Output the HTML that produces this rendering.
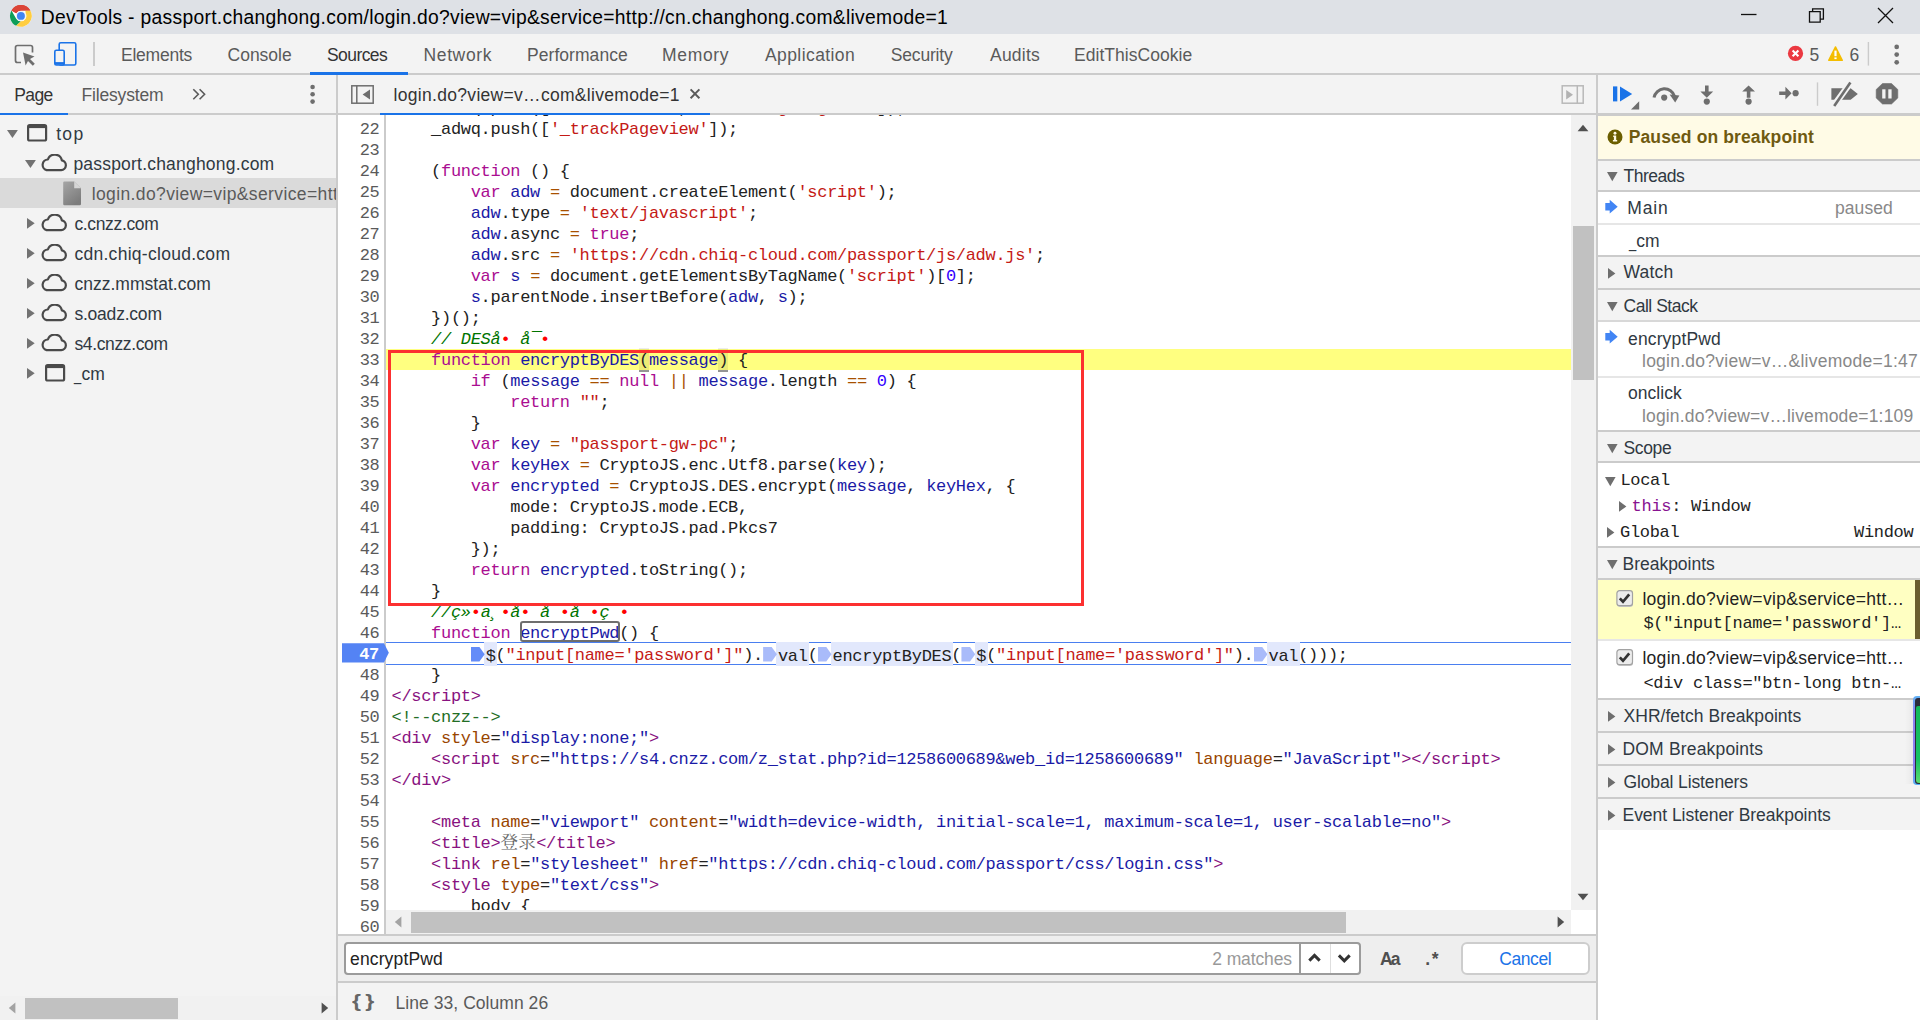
<!DOCTYPE html><html lang="en"><head><meta charset="utf-8"><title>DevTools</title><style>
*{box-sizing:border-box;margin:0;padding:0}
html,body{width:1920px;height:1020px;overflow:hidden;background:#fff}
body{font-family:"Liberation Sans","Noto Sans CJK SC",sans-serif;font-size:17.5px;color:#303942;position:relative}
.abs{position:absolute}
.tx{position:absolute;white-space:pre;line-height:24px;height:24px}
.mono{font-family:"Liberation Mono","Noto Sans CJK SC",monospace;font-size:17px;letter-spacing:-0.3017px}
#title{left:0;top:0;width:1920px;height:34px;background:#dee1e6}
#tabs{left:0;top:34px;width:1920px;height:41px;background:#f3f3f3;border-bottom:2px solid #cbcbcb}
.tab{color:#5a5a5a}
.sel{color:#333}
#sub{left:0;top:75px;width:1920px;height:40px;background:#f3f3f3;border-bottom:2px solid #cbcbcb}
#left{left:0;top:115px;width:336px;height:905px;background:#f3f3f3;overflow:hidden}
#vsep1{left:336px;top:75px;width:2px;height:945px;background:#cbcbcb}
#vsep2{left:1596px;top:75px;width:2px;height:945px;background:#cbcbcb}
#editor{left:338px;top:115px;width:1233px;height:795px;background:#fff;overflow:hidden}
#gutter{left:338px;top:115px;width:46px;height:819px;background:#fff;overflow:hidden}
#gutb{left:384px;top:115px;width:2px;height:819px;background:#cbcbcb}
.gn{position:absolute;right:4.5px;height:21px;line-height:21px;color:#5a5a5a;font-family:"Liberation Mono",monospace;font-size:17px;letter-spacing:-0.3017px;text-align:right;white-space:pre}
.cl{position:absolute;left:53.5px;height:21px;line-height:21px;white-space:pre;color:#222;font-family:"Liberation Mono","Noto Sans CJK SC",monospace;font-size:17px;letter-spacing:-0.3017px}
.k{color:#aa0d91}.s{color:#c41a16}.n{color:#3200ff}.v{color:#1a1aa6}.o{color:#a85000}
.c{color:#007400;font-style:italic}.rd{color:#f00;font-style:normal}
.t{color:#881280}.a{color:#994500}.av{color:#1a1aa6}.hc{color:#236e25}
.cj{color:#666;font-family:"Noto Serif CJK SC","Noto Sans CJK SC",serif;font-size:17.6px;letter-spacing:0.25px;line-height:0}
.mb{background:rgba(0,0,0,0.075);border-bottom:2px solid #949494;padding:2.6px 0 0.4px;color:#222}
.sm{outline:1.5px solid #777;outline-offset:-1px;border-radius:2px}
.bm{display:inline-block;width:15px;height:0;vertical-align:baseline;position:relative}
.bm:before{content:"";position:absolute;left:0.2px;top:-12.9px;width:13.8px;height:14.4px;background:#648cf8;clip-path:polygon(0 0,62% 0,100% 50%,62% 100%,0 100%)}
.bm.lt:before{background:#a9bbfa}
.bl{background:#e2e8fc;padding:4.5px 1.5px 0.5px;margin:0 -1.5px}
</style></head><body>
<div id="title" class="abs">
<svg class="abs" style="left:9.1px;top:4.3px" width="23.8" height="23.8" viewBox="0 0 48 48">
<circle cx="24" cy="24" r="22" fill="#fff"/>
<path d="M24 2A22 22 0 0 1 43.05 13H24A11 11 0 0 0 14.47 18.5L4.95 13A22 22 0 0 1 24 2Z" fill="#db4437"/>
<path d="M4.95 13L14.47 29.5A11 11 0 0 0 24 35L14.5 43.9A22 22 0 0 1 4.95 13Z" fill="#0f9d58"/>
<path d="M43.05 13A22 22 0 0 1 14.5 43.9L24 35A11 11 0 0 0 33.53 29.5A11 11 0 0 0 33.53 18.5L33 13Z" fill="#ffcd40"/>
<path d="M4.95 13A22 22 0 0 1 43.05 13H24A11 11 0 0 0 14.47 18.5Z" fill="#db4437"/>
<circle cx="24" cy="24" r="10" fill="#f1f1f1"/><circle cx="24" cy="24" r="8" fill="#4285f4"/></svg>
<span id="f1" class="tx " style="left:40.80px;top:6.3px;letter-spacing:0.296px;color:#000;font-size:19.3px;">DevTools - passport.changhong.com/login.do?view=vip&amp;service=http://cn.changhong.com&amp;livemode=1</span>
<svg class="abs" style="left:1730px;top:0" width="190" height="34" viewBox="0 0 190 34" fill="none" stroke="#111" stroke-width="1.3">
<path d="M11 14.5H26.5"/>
<path d="M79.5 11.6H90.2V22.2H79.5Z M82.6 11.6V8.8H93.4V19.1H90.2"/>
<path d="M148 8L163 23M163 8L148 23"/></svg>
</div>
<div id="tabs" class="abs"></div>
<svg class="abs" style="left:10px;top:38px" width="90" height="32" viewBox="0 0 90 32" fill="none">
<path d="M22.5 14.5V9.5a2 2 0 0 0-2-2H7.5a2 2 0 0 0-2 2v13a2 2 0 0 0 2 2H11" stroke="#6e6e6e" stroke-width="1.7"/>
<path d="M13 14.5L24.5 18.6L20 21L24.8 25.8L22.8 27.8L18 23L15.6 27.5Z" fill="#6e6e6e"/>
<rect x="49.2" y="4.7" width="16.6" height="22.3" rx="1.5" stroke="#1a73e8" stroke-width="1.6"/>
<rect x="44.8" y="12.2" width="9.4" height="14.8" rx="1.5" fill="#f3f3f3" stroke="#1a73e8" stroke-width="1.6"/>
<path d="M44.8 25.4H54.2" stroke="#1a73e8" stroke-width="2.6"/>
<path d="M84 4V28" stroke="#cbcbcb" stroke-width="2"/>
</svg>
<span id="f2" class="tx tab" style="left:121.00px;top:42.5px;letter-spacing:-0.243px;">Elements</span>
<span id="f3" class="tx tab" style="left:227.50px;top:42.5px;letter-spacing:0.004px;">Console</span>
<span id="f4" class="tx tab sel" style="left:327.00px;top:42.5px;letter-spacing:-0.575px;">Sources</span>
<span id="f5" class="tx tab" style="left:423.50px;top:42.5px;letter-spacing:0.628px;">Network</span>
<span id="f6" class="tx tab" style="left:527.00px;top:42.5px;letter-spacing:0.055px;">Performance</span>
<span id="f7" class="tx tab" style="left:662.00px;top:42.5px;letter-spacing:0.670px;">Memory</span>
<span id="f8" class="tx tab" style="left:765.00px;top:42.5px;letter-spacing:0.412px;">Application</span>
<span id="f9" class="tx tab" style="left:890.80px;top:42.5px;letter-spacing:-0.181px;">Security</span>
<span id="f10" class="tx tab" style="left:990.00px;top:42.5px;letter-spacing:0.222px;">Audits</span>
<span id="f11" class="tx tab" style="left:1074.00px;top:42.5px;letter-spacing:0.042px;">EditThisCookie</span>
<div class="abs" style="left:309.5px;top:72px;width:98px;height:3px;background:#1a73e8"></div>
<svg class="abs" style="left:1780px;top:38px" width="140" height="34" viewBox="0 0 140 34">
<circle cx="15.5" cy="15.4" r="7.6" fill="#eb3941"/>
<path d="M12.6 12.5L18.4 18.3M18.4 12.5L12.6 18.3" stroke="#fff" stroke-width="2.1"/>
<path d="M55.5 8.9L62.3 22.3H48.7Z" fill="#f4bd00" stroke="#f4bd00" stroke-width="1.4" stroke-linejoin="round"/>
<path d="M55.5 12.6V18.2" stroke="#fff" stroke-width="2.2"/><rect x="54.4" y="19.4" width="2.2" height="1.7" fill="#fff"/>
<path d="M88.4 4V27.6" stroke="#cbcbcb" stroke-width="1.4"/>
<circle cx="116.7" cy="8.9" r="2.35" fill="#6e6e6e"/><circle cx="116.7" cy="16.6" r="2.35" fill="#6e6e6e"/><circle cx="116.7" cy="24.3" r="2.35" fill="#6e6e6e"/>
</svg>
<span id="f12" class="tx tab" style="left:1809.50px;top:42.5px;">5</span>
<span id="f13" class="tx tab" style="left:1849.50px;top:42.5px;">6</span>
<div id="sub" class="abs"></div>
<span id="f14" class="tx sel" style="left:14.30px;top:82.5px;letter-spacing:-0.613px;">Page</span>
<span id="f15" class="tx tab" style="left:81.50px;top:82.5px;letter-spacing:-0.171px;">Filesystem</span>
<div class="abs" style="left:0;top:112.6px;width:68px;height:2.4px;background:#1a73e8"></div>
<svg class="abs" style="left:185px;top:80px" width="200" height="30" viewBox="0 0 200 30" fill="none">
<path d="M8.3 9.2L13.3 14.2L8.3 19.2M14.6 9.2L19.6 14.2L14.6 19.2" stroke="#5a5a5a" stroke-width="1.6"/>
<circle cx="127.6" cy="7" r="2.3" fill="#6e6e6e"/><circle cx="127.6" cy="14.2" r="2.3" fill="#6e6e6e"/><circle cx="127.6" cy="21.6" r="2.3" fill="#6e6e6e"/>
<rect x="166.8" y="5.8" width="21.4" height="17.4" stroke="#6e6e6e" stroke-width="1.5"/>
<path d="M171.8 5.8V23.2" stroke="#6e6e6e" stroke-width="1.5"/>
<path d="M185 9.5V19.5L177.6 14.5Z" fill="#6e6e6e"/>
</svg>
<span id="f16" class="tx sel" style="left:393.60px;top:82.5px;letter-spacing:0.300px;">login.do?view=v…com&amp;livemode=1</span>
<svg class="abs" style="left:688px;top:87px" width="14" height="14" viewBox="0 0 14 14"><path d="M2.6 2.4L11.4 11.2M11.4 2.4L2.6 11.2" stroke="#5a5a5a" stroke-width="2"/></svg>
<div class="abs" style="left:380px;top:112.6px;width:329.5px;height:2.4px;background:#1a73e8"></div>
<svg class="abs" style="left:1555px;top:82px" width="34" height="26" viewBox="0 0 34 26" fill="none">
<rect x="7.2" y="3.8" width="21" height="17.4" stroke="#b8b8b8" stroke-width="1.5"/>
<path d="M22.3 3.8V21.2" stroke="#b8b8b8" stroke-width="1.5"/>
<path d="M11.2 8V17.4L18 12.7Z" fill="#b2b2b2"/></svg>
<div id="left" class="abs">
</div>
<div class="abs" style="left:0;top:178px;width:336px;height:30px;background:#dadada"></div>
<svg class="abs" style="left:7.3px;top:130.1px" width="12" height="10" viewBox="0 0 12 10"><path d="M0 0H10.9L5.45 8.1Z" fill="#727272"/></svg>
<svg class="abs" style="left:26.8px;top:124.0px" width="22" height="19" viewBox="0 0 22 19" fill="none"><rect x="1.1" y="1.1" width="18" height="15.4" rx="1.6" stroke="#4a4a4a" stroke-width="2.2"/><path d="M1.1 2.6H19.1" stroke="#4a4a4a" stroke-width="3"/></svg>
<span id="f17" class="tx " style="left:56.20px;top:121.5px;letter-spacing:1.303px;">top</span>
<svg class="abs" style="left:25.0px;top:159.8px" width="12" height="10" viewBox="0 0 12 10"><path d="M0 0H10.9L5.45 8.1Z" fill="#727272"/></svg>
<svg class="abs" style="left:40.4px;top:154.2px" width="29" height="19" viewBox="0 0 29 19" fill="none"><path d="M6.6 16.1H21.2A4.9 4.9 0 0 0 21.9 6.4A7.3 7.3 0 0 0 7.9 5.5A5.4 5.4 0 0 0 6.6 16.1Z" stroke="#4a4a4a" stroke-width="2.2" stroke-linejoin="round"/></svg>
<span id="f18" class="tx " style="left:73.40px;top:151.5px;letter-spacing:0.203px;">passport.changhong.com</span>
<svg class="abs" style="left:63px;top:180.6px" width="20" height="25" viewBox="0 0 20 25"><defs><linearGradient id="fg" x1="0" y1="0" x2="0.6" y2="1"><stop offset="0" stop-color="#a6a6a6"/><stop offset="1" stop-color="#7c7c7c"/></linearGradient></defs><path d="M1.4 0.4H11.2L18 7.2V23A1.2 1.2 0 0 1 16.8 24.2H1.4A1.2 1.2 0 0 1 0.2 23V1.6A1.2 1.2 0 0 1 1.4 0.4Z" fill="url(#fg)"/><path d="M11.2 0.4V7.2H18Z" fill="#d6d6d6"/></svg>
<div class="abs" style="left:0;top:178px;width:336px;height:30px;overflow:hidden"><span id="f19" class="tx " style="left:91.70px;top:3.5px;letter-spacing:0.381px;color:#5a5a5a">login.do?view=vip&amp;service=http://cn.changhong.com&amp;livemode=1</span></div>
<svg class="abs" style="left:27.0px;top:217.8px" width="10" height="12" viewBox="0 0 10 12"><path d="M0 0V10.7L7.7 5.35Z" fill="#727272"/></svg>
<svg class="abs" style="left:40.4px;top:214.0px" width="29" height="19" viewBox="0 0 29 19" fill="none"><path d="M6.6 16.1H21.2A4.9 4.9 0 0 0 21.9 6.4A7.3 7.3 0 0 0 7.9 5.5A5.4 5.4 0 0 0 6.6 16.1Z" stroke="#4a4a4a" stroke-width="2.2" stroke-linejoin="round"/></svg>
<span id="f20" class="tx " style="left:74.40px;top:211.5px;letter-spacing:-0.349px;">c.cnzz.com</span>
<svg class="abs" style="left:27.0px;top:247.8px" width="10" height="12" viewBox="0 0 10 12"><path d="M0 0V10.7L7.7 5.35Z" fill="#727272"/></svg>
<svg class="abs" style="left:40.4px;top:244.0px" width="29" height="19" viewBox="0 0 29 19" fill="none"><path d="M6.6 16.1H21.2A4.9 4.9 0 0 0 21.9 6.4A7.3 7.3 0 0 0 7.9 5.5A5.4 5.4 0 0 0 6.6 16.1Z" stroke="#4a4a4a" stroke-width="2.2" stroke-linejoin="round"/></svg>
<span id="f21" class="tx " style="left:74.40px;top:241.5px;letter-spacing:0.283px;">cdn.chiq-cloud.com</span>
<svg class="abs" style="left:27.0px;top:277.8px" width="10" height="12" viewBox="0 0 10 12"><path d="M0 0V10.7L7.7 5.35Z" fill="#727272"/></svg>
<svg class="abs" style="left:40.4px;top:274.0px" width="29" height="19" viewBox="0 0 29 19" fill="none"><path d="M6.6 16.1H21.2A4.9 4.9 0 0 0 21.9 6.4A7.3 7.3 0 0 0 7.9 5.5A5.4 5.4 0 0 0 6.6 16.1Z" stroke="#4a4a4a" stroke-width="2.2" stroke-linejoin="round"/></svg>
<span id="f22" class="tx " style="left:74.40px;top:271.5px;letter-spacing:0.018px;">cnzz.mmstat.com</span>
<svg class="abs" style="left:27.0px;top:307.8px" width="10" height="12" viewBox="0 0 10 12"><path d="M0 0V10.7L7.7 5.35Z" fill="#727272"/></svg>
<svg class="abs" style="left:40.4px;top:304.0px" width="29" height="19" viewBox="0 0 29 19" fill="none"><path d="M6.6 16.1H21.2A4.9 4.9 0 0 0 21.9 6.4A7.3 7.3 0 0 0 7.9 5.5A5.4 5.4 0 0 0 6.6 16.1Z" stroke="#4a4a4a" stroke-width="2.2" stroke-linejoin="round"/></svg>
<span id="f23" class="tx " style="left:74.40px;top:301.5px;letter-spacing:-0.212px;">s.oadz.com</span>
<svg class="abs" style="left:27.0px;top:337.8px" width="10" height="12" viewBox="0 0 10 12"><path d="M0 0V10.7L7.7 5.35Z" fill="#727272"/></svg>
<svg class="abs" style="left:40.4px;top:334.0px" width="29" height="19" viewBox="0 0 29 19" fill="none"><path d="M6.6 16.1H21.2A4.9 4.9 0 0 0 21.9 6.4A7.3 7.3 0 0 0 7.9 5.5A5.4 5.4 0 0 0 6.6 16.1Z" stroke="#4a4a4a" stroke-width="2.2" stroke-linejoin="round"/></svg>
<span id="f24" class="tx " style="left:74.40px;top:331.5px;letter-spacing:-0.367px;">s4.cnzz.com</span>
<svg class="abs" style="left:27.0px;top:367.8px" width="10" height="12" viewBox="0 0 10 12"><path d="M0 0V10.7L7.7 5.35Z" fill="#727272"/></svg>
<svg class="abs" style="left:44.8px;top:364.2px" width="22" height="19" viewBox="0 0 22 19" fill="none"><rect x="1.1" y="1.1" width="18" height="15.4" rx="1.6" stroke="#4a4a4a" stroke-width="2.2"/><path d="M1.1 2.6H19.1" stroke="#4a4a4a" stroke-width="3"/></svg>
<span id="f25" class="tx " style="left:74.30px;top:361.5px;"><span style="display:inline-block;transform:scaleX(.74);transform-origin:left bottom;margin-right:-2.6px">_</span>cm</span>
<div class="abs" style="left:0;top:995.5px;width:336px;height:24.5px;background:#f1f1f1"></div>
<div class="abs" style="left:25px;top:998px;width:153px;height:21px;background:#c1c1c1"></div>
<svg class="abs" style="left:8px;top:1002px" width="8" height="12" viewBox="0 0 8 12"><path d="M7.4 0.6V11.4L0.8 6Z" fill="#a3a3a3"/></svg>
<svg class="abs" style="left:320.5px;top:1002px" width="8" height="12" viewBox="0 0 8 12"><path d="M0.6 0.6V11.4L7.2 6Z" fill="#505050"/></svg>
<div id="vsep1" class="abs"></div>
<div id="editor" class="abs">
<div class="abs" style="left:48px;top:234px;width:1185px;height:21px;background:#ffff80"></div>
<div class="abs" style="left:48px;top:527px;width:1185px;height:23px;border-top:1.3px solid #4a7ff0;border-bottom:1.3px solid #4a7ff0"></div>
<div class="abs" style="left:0;top:-115px;width:1233px;height:910px">
<div class="cl l21" style="top:98.0px">    _adwq.push([<span class="s">&#x27;_setAccount&#x27;</span>, <span class="s">&#x27;web-cn-g001g-001&#x27;</span>]);</div>
<div class="cl l22" style="top:119.0px">    _adwq.push([<span class="s">&#x27;_trackPageview&#x27;</span>]);</div>
<div class="cl l23" style="top:140.0px"></div>
<div class="cl l24" style="top:161.0px">    (<span class="k">function</span> () {</div>
<div class="cl l25" style="top:182.0px">        <span class="k">var</span> <span class="v">adw</span> <span class="o">=</span> document.createElement(<span class="s">&#x27;script&#x27;</span>);</div>
<div class="cl l26" style="top:203.0px">        <span class="v">adw</span>.type <span class="o">=</span> <span class="s">&#x27;text/javascript&#x27;</span>;</div>
<div class="cl l27" style="top:224.0px">        <span class="v">adw</span>.async <span class="o">=</span> <span class="k">true</span>;</div>
<div class="cl l28" style="top:245.0px">        <span class="v">adw</span>.src <span class="o">=</span> <span class="s">&#x27;https://cdn.chiq-cloud.com/passport/js/adw.js&#x27;</span>;</div>
<div class="cl l29" style="top:266.0px">        <span class="k">var</span> <span class="v">s</span> <span class="o">=</span> document.getElementsByTagName(<span class="s">&#x27;script&#x27;</span>)[<span class="n">0</span>];</div>
<div class="cl l30" style="top:287.0px">        <span class="v">s</span>.parentNode.insertBefore(<span class="v">adw</span>, <span class="v">s</span>);</div>
<div class="cl l31" style="top:308.0px">    })();</div>
<div class="cl l32" style="top:329.0px">    <span class="c">// DESå<span class="rd">•</span> å¯<span class="rd">•</span></span></div>
<div class="cl l33" style="top:350.0px">    <span class="k">function</span> <span class="v">encryptByDES</span><span class="mb">(</span><span class="v">message</span><span class="mb">)</span> {</div>
<div class="cl l34" style="top:371.0px">        <span class="k">if</span> (<span class="v">message</span> <span class="o">==</span> <span class="k">null</span> <span class="o">||</span> <span class="v">message</span>.length <span class="o">==</span> <span class="n">0</span>) {</div>
<div class="cl l35" style="top:392.0px">            <span class="k">return</span> <span class="s">&quot;&quot;</span>;</div>
<div class="cl l36" style="top:413.0px">        }</div>
<div class="cl l37" style="top:434.0px">        <span class="k">var</span> <span class="v">key</span> <span class="o">=</span> <span class="s">&quot;passport-gw-pc&quot;</span>;</div>
<div class="cl l38" style="top:455.0px">        <span class="k">var</span> <span class="v">keyHex</span> <span class="o">=</span> CryptoJS.enc.Utf8.parse(<span class="v">key</span>);</div>
<div class="cl l39" style="top:476.0px">        <span class="k">var</span> <span class="v">encrypted</span> <span class="o">=</span> CryptoJS.DES.encrypt(<span class="v">message</span>, <span class="v">keyHex</span>, {</div>
<div class="cl l40" style="top:497.0px">            mode: CryptoJS.mode.ECB,</div>
<div class="cl l41" style="top:518.0px">            padding: CryptoJS.pad.Pkcs7</div>
<div class="cl l42" style="top:539.0px">        });</div>
<div class="cl l43" style="top:560.0px">        <span class="k">return</span> <span class="v">encrypted</span>.toString();</div>
<div class="cl l44" style="top:581.0px">    }</div>
<div class="cl l45" style="top:602.0px">    <span class="c">//ç»<span class="rd">•</span>a¸<span class="rd">•</span>å<span class="rd">•</span> å <span class="rd">•</span>å <span class="rd">•</span>ç <span class="rd">•</span></span></div>
<div class="cl l46" style="top:623.0px">    <span class="k">function</span> <span class="v">encryptPwd</span>() {</div>
<div class="cl l47" style="top:645.0px">        <span class="bm"></span><span class="bl">$</span>(<span class="s">"input[name='password']"</span>).<span class="bm lt"></span><span class="bl">val</span>(<span class="bm lt"></span><span class="bl">encryptByDES</span>(<span class="bm lt"></span><span class="bl">$</span>(<span class="s">"input[name='password']"</span>).<span class="bm lt"></span><span class="bl">val</span>()));</div>
<div class="cl l48" style="top:665.0px">    }</div>
<div class="cl l49" style="top:686.0px"><span class="t">&lt;/script&gt;</span></div>
<div class="cl l50" style="top:707.0px"><span class="hc">&lt;!--cnzz--&gt;</span></div>
<div class="cl l51" style="top:728.0px"><span class="t">&lt;div </span><span class="a">style</span>=<span class="av">&quot;display:none;&quot;</span><span class="t">&gt;</span></div>
<div class="cl l52" style="top:749.0px">    <span class="t">&lt;script </span><span class="a">src</span>=<span class="av">&quot;https://s4.cnzz.com/z_stat.php?id=1258600689&amp;web_id=1258600689&quot;</span> <span class="a">language</span>=<span class="av">&quot;JavaScript&quot;</span><span class="t">&gt;&lt;/script&gt;</span></div>
<div class="cl l53" style="top:770.0px"><span class="t">&lt;/div&gt;</span></div>
<div class="cl l54" style="top:791.0px"></div>
<div class="cl l55" style="top:812.0px">    <span class="t">&lt;meta </span><span class="a">name</span>=<span class="av">&quot;viewport&quot;</span> <span class="a">content</span>=<span class="av">&quot;width=device-width, initial-scale=1, maximum-scale=1, user-scalable=no&quot;</span><span class="t">&gt;</span></div>
<div class="cl l56" style="top:833.0px">    <span class="t">&lt;title&gt;</span><span class="cj">登录</span><span class="t">&lt;/title&gt;</span></div>
<div class="cl l57" style="top:854.0px">    <span class="t">&lt;link </span><span class="a">rel</span>=<span class="av">&quot;stylesheet&quot;</span> <span class="a">href</span>=<span class="av">&quot;https://cdn.chiq-cloud.com/passport/css/login.css&quot;</span><span class="t">&gt;</span></div>
<div class="cl l58" style="top:875.0px">    <span class="t">&lt;style </span><span class="a">type</span>=<span class="av">&quot;text/css&quot;</span><span class="t">&gt;</span></div>
<div class="cl l59" style="top:896.0px">        body {</div>
<div class="cl l60" style="top:917.0px"></div>
</div>
<div class="abs" style="left:50px;top:235px;width:696px;height:256px;border:3px solid #fc3030"></div>
<div class="abs" style="left:182.2px;top:505.5px;width:100px;height:21px;border:2px solid #6e6e6e;border-radius:3px"></div>
</div>
<div id="gutter" class="abs"><div class="abs" style="left:0;top:-115px;width:46px;height:1000px">
<div class="gn" style="top:119px">22</div>
<div class="gn" style="top:140px">23</div>
<div class="gn" style="top:161px">24</div>
<div class="gn" style="top:182px">25</div>
<div class="gn" style="top:203px">26</div>
<div class="gn" style="top:224px">27</div>
<div class="gn" style="top:245px">28</div>
<div class="gn" style="top:266px">29</div>
<div class="gn" style="top:287px">30</div>
<div class="gn" style="top:308px">31</div>
<div class="gn" style="top:329px">32</div>
<div class="gn" style="top:350px">33</div>
<div class="gn" style="top:371px">34</div>
<div class="gn" style="top:392px">35</div>
<div class="gn" style="top:413px">36</div>
<div class="gn" style="top:434px">37</div>
<div class="gn" style="top:455px">38</div>
<div class="gn" style="top:476px">39</div>
<div class="gn" style="top:497px">40</div>
<div class="gn" style="top:518px">41</div>
<div class="gn" style="top:539px">42</div>
<div class="gn" style="top:560px">43</div>
<div class="gn" style="top:581px">44</div>
<div class="gn" style="top:602px">45</div>
<div class="gn" style="top:623px">46</div>
<div class="gn bp" style="top:644px"> </div>
<div class="gn" style="top:665px">48</div>
<div class="gn" style="top:686px">49</div>
<div class="gn" style="top:707px">50</div>
<div class="gn" style="top:728px">51</div>
<div class="gn" style="top:749px">52</div>
<div class="gn" style="top:770px">53</div>
<div class="gn" style="top:791px">54</div>
<div class="gn" style="top:812px">55</div>
<div class="gn" style="top:833px">56</div>
<div class="gn" style="top:854px">57</div>
<div class="gn" style="top:875px">58</div>
<div class="gn" style="top:896px">59</div>
<div class="gn" style="top:917px">60</div>
</div></div>
<div id="gutb" class="abs"></div>
<svg class="abs" style="left:342px;top:643px" width="50" height="21" viewBox="0 0 50 21"><path d="M0 0.3H42L46.8 9.8L42 19.4H0Z" fill="#5483f4"/></svg>
<div class="gn abs" style="left:341px;top:643.6px;width:38px;color:#fff;text-align:right;font-weight:bold">47</div>
<div class="abs" style="left:1571px;top:115px;width:25px;height:795px;background:#f1f1f1"></div>
<div class="abs" style="left:1573px;top:226px;width:21px;height:154px;background:#c1c1c1"></div>
<svg class="abs" style="left:1577px;top:124px" width="12" height="8" viewBox="0 0 12 8"><path d="M0.6 7.2H11.4L6 0.8Z" fill="#505050"/></svg>
<svg class="abs" style="left:1577px;top:893px" width="12" height="8" viewBox="0 0 12 8"><path d="M0.6 0.8H11.4L6 7.2Z" fill="#505050"/></svg>
<div class="abs" style="left:386px;top:910px;width:1185px;height:24px;background:#f1f1f1"></div>
<div class="abs" style="left:411px;top:912px;width:935px;height:21px;background:#c1c1c1"></div>
<svg class="abs" style="left:394px;top:916px" width="8" height="12" viewBox="0 0 8 12"><path d="M7.4 0.6V11.4L0.8 6Z" fill="#a3a3a3"/></svg>
<svg class="abs" style="left:1556.5px;top:916px" width="8" height="12" viewBox="0 0 8 12"><path d="M0.6 0.6V11.4L7.2 6Z" fill="#505050"/></svg>
<div class="abs" style="left:1571px;top:910px;width:25px;height:24px;background:#fff"></div>
<div class="abs" style="left:338px;top:934px;width:1258px;height:49px;background:#eee;border-top:2px solid #cbcbcb;border-bottom:2px solid #cbcbcb"></div>
<div class="abs" style="left:344px;top:942px;width:1017px;height:33px;background:#fff;border:2px solid #9b9b9b;border-radius:4px"></div>
<div class="abs" style="left:1298.8px;top:942px;width:2px;height:33px;background:#9b9b9b"></div>
<div class="abs" style="left:1329.5px;top:944px;width:1.2px;height:29px;background:#dedede"></div>
<span id="f26" class="tx " style="left:350.00px;top:946.7px;letter-spacing:0.145px;color:#222">encryptPwd</span>
<span id="f27" class="tx " style="left:1212.30px;top:946.7px;letter-spacing:-0.123px;color:#999">2 matches</span>
<svg class="abs" style="left:1304px;top:948px" width="52" height="20" viewBox="0 0 52 20" fill="none" stroke="#333" stroke-width="3"><path d="M5.3 12.6L10.5 7.4L15.7 12.6"/><path d="M34.9 7.4L40.3 12.8L45.7 7.4"/></svg>
<span id="f28" class="tx " style="left:1380.00px;top:946.7px;letter-spacing:-1.838px;color:#4f4f4f;font-weight:bold">Aa</span>
<span id="f29" class="tx " style="left:1425.30px;top:946.7px;letter-spacing:1.538px;color:#4f4f4f;font-weight:bold">.*</span>
<div class="abs" style="left:1460.5px;top:942px;width:129px;height:33px;background:#fff;border:2px solid #cdcdcd;border-radius:6px"></div>
<span id="f30" class="tx " style="left:1499.20px;top:946.7px;letter-spacing:-0.397px;color:#1a73e8">Cancel</span>
<div class="abs" style="left:338px;top:983px;width:1258px;height:37px;background:#f3f3f3"></div>
<span id="f31" class="tx " style="left:351.50px;top:988.6px;letter-spacing:3.401px;color:#666;font-weight:bold;font-size:18.5px;transform:scaleX(1.25);transform-origin:left center">{}</span>
<span id="f32" class="tx " style="left:395.60px;top:990.6px;letter-spacing:0.045px;color:#5a5a5a">Line 33, Column 26</span>
<div id="vsep2" class="abs"></div>
<div class="abs" style="left:1598px;top:115px;width:322px;height:905px;background:#fff"></div>
<svg class="abs" style="left:1600px;top:76px" width="320" height="38" viewBox="0 0 320 38">
<rect x="13" y="10.4" width="4.3" height="15" fill="#1a73e8"/><path d="M20 10.4V25.4L32.2 17.9Z" fill="#1a73e8"/>
<path d="M39.2 25.2V33.4H31Z" fill="#6e6e6e"/>
<path d="M54 21.6A10.6 10.6 0 0 1 74.6 20.4" fill="none" stroke="#6e6e6e" stroke-width="3"/>
<path d="M69.6 18.6L79.4 19.4L75.2 26.4Z" fill="#6e6e6e"/><circle cx="64.2" cy="21.6" r="3.1" fill="#6e6e6e"/>
<path d="M105 9.4H108.6V15.6H113.2L106.8 21.8L100.4 15.6H105Z" fill="#6e6e6e"/><circle cx="106.8" cy="25.6" r="3.1" fill="#6e6e6e"/>
<path d="M146.8 21.8H150.4V15.6H155L148.6 9.4L142.2 15.6H146.8Z" fill="#6e6e6e"/><circle cx="148.6" cy="25.6" r="3.1" fill="#6e6e6e"/>
<path d="M179.2 15.4H185.4V10.8L191.6 17.2L185.4 23.6V19H179.2Z" fill="#6e6e6e"/><circle cx="195.6" cy="17.2" r="3.1" fill="#6e6e6e"/>
<path d="M217.5 6.4V29.8" stroke="#cbcbcb" stroke-width="1.4"/>
<path d="M231.4 12.2H250.6L257.8 18L250.6 23.8H231.4Z" fill="#6e6e6e"/>
<path d="M251.4 5.4L233.2 30.6" stroke="#f3f3f3" stroke-width="6.4"/><path d="M250.4 6.4L234.2 30" stroke="#6e6e6e" stroke-width="2.6"/>
<path d="M282.5 7.5H291.5L297.8 13.5V22L291.5 28H282.5L276.2 22V13.5Z" fill="#6e6e6e" stroke="#6e6e6e" stroke-width="0.6" stroke-linejoin="round"/>
<rect x="282.2" y="13.3" width="3.3" height="9.2" fill="#f3f3f3"/><rect x="288.3" y="13.3" width="3.3" height="9.2" fill="#f3f3f3"/>
</svg>
<div class="abs" style="left:1598px;top:115px;width:322px;height:1px;background:#cbcbcb;z-index:3"></div>
<div class="abs" style="left:1598px;top:115px;width:322px;height:44px;background:#fffbe6"></div>
<svg class="abs" style="left:1606.5px;top:128.5px" width="16" height="16" viewBox="0 0 16 16"><circle cx="8" cy="8" r="7.5" fill="#6b5e00"/><path d="M6.2 6.6H9.2V11H10.2V12.4H5.9V11H6.9V8H6.2Z" fill="#fffbe6"/><circle cx="8" cy="4.3" r="1.45" fill="#fffbe6"/></svg>
<span id="f33" class="tx " style="left:1628.70px;top:124.6px;letter-spacing:0.122px;color:#6f5a10;font-weight:bold">Paused on breakpoint</span>
<div class="abs" style="left:1598px;top:159.0px;width:322px;height:33.0px;background:#f3f3f3"></div><div class="abs" style="left:1598px;top:159.0px;width:322px;height:2.0px;background:#cbcbcb"></div><div class="abs" style="left:1598px;top:190.0px;width:322px;height:2.0px;background:#cbcbcb"></div><svg class="abs" style="left:1606.7px;top:172.4px" width="12" height="10" viewBox="0 0 12 10"><path d="M0 0H10.6L5.3 9.2Z" fill="#6e6e6e"/></svg><span id="f34" class="tx " style="left:1623.50px;top:163.9px;letter-spacing:-0.491px;">Threads</span>
<svg class="abs" style="left:1605px;top:199.0px" width="14" height="16" viewBox="0 0 14 16"><path d="M0.3 3.9H4.7V0.8L12.7 7.7L4.7 14.6V11.4H0.3Z" fill="#4285f4"/></svg>
<span id="f35" class="tx " style="left:1627.30px;top:195.5px;letter-spacing:0.834px;">Main</span>
<span id="f36" class="tx " style="left:1835.00px;top:195.5px;letter-spacing:0.064px;color:#888">paused</span>
<div class="abs" style="left:1598px;top:223.0px;width:322px;height:2.0px;background:#e6e6e6"></div>
<span id="f37" class="tx " style="left:1629.20px;top:228.7px;"><span style="display:inline-block;transform:scaleX(.74);transform-origin:left bottom;margin-right:-2.6px">_</span>cm</span>
<div class="abs" style="left:1598px;top:255.4px;width:322px;height:34.6px;background:#f3f3f3"></div><div class="abs" style="left:1598px;top:255.4px;width:322px;height:2.0px;background:#cbcbcb"></div><div class="abs" style="left:1598px;top:288.0px;width:322px;height:2.0px;background:#cbcbcb"></div><svg class="abs" style="left:1608.0px;top:267.7px" width="9" height="12" viewBox="0 0 9 12"><path d="M0 0V10.8L7.4 5.4Z" fill="#6e6e6e"/></svg><span id="f38" class="tx " style="left:1623.50px;top:260.3px;letter-spacing:0.197px;">Watch</span>
<div class="abs" style="left:1598px;top:288.0px;width:322px;height:34.0px;background:#f3f3f3"></div><div class="abs" style="left:1598px;top:288.0px;width:322px;height:2.0px;background:#cbcbcb"></div><div class="abs" style="left:1598px;top:320.0px;width:322px;height:2.0px;background:#cbcbcb"></div><svg class="abs" style="left:1606.7px;top:302.1px" width="12" height="10" viewBox="0 0 12 10"><path d="M0 0H10.6L5.3 9.2Z" fill="#6e6e6e"/></svg><span id="f39" class="tx " style="left:1623.50px;top:293.6px;letter-spacing:-0.470px;">Call Stack</span>
<div class="abs" style="left:1598px;top:320.0px;width:322px;height:2.0px;background:#d8d8d8"></div>
<svg class="abs" style="left:1605px;top:329.4px" width="14" height="16" viewBox="0 0 14 16"><path d="M0.3 3.9H4.7V0.8L12.7 7.7L4.7 14.6V11.4H0.3Z" fill="#4285f4"/></svg>
<span id="f40" class="tx " style="left:1628.00px;top:326.9px;letter-spacing:0.145px;">encryptPwd</span>
<span id="f41" class="tx " style="left:1642.00px;top:348.7px;letter-spacing:0.249px;color:#888">login.do?view=v…&amp;livemode=1:47</span>
<div class="abs" style="left:1598px;top:376.0px;width:322px;height:2.0px;background:#e6e6e6"></div>
<span id="f42" class="tx " style="left:1628.00px;top:381.4px;letter-spacing:0.043px;">onclick</span>
<span id="f43" class="tx " style="left:1642.00px;top:403.9px;letter-spacing:0.158px;color:#888">login.do?view=v…livemode=1:109</span>
<div class="abs" style="left:1598px;top:430.0px;width:322px;height:33.0px;background:#f3f3f3"></div><div class="abs" style="left:1598px;top:430.0px;width:322px;height:2.0px;background:#cbcbcb"></div><div class="abs" style="left:1598px;top:461.0px;width:322px;height:2.0px;background:#cbcbcb"></div><svg class="abs" style="left:1606.7px;top:444.0px" width="12" height="10" viewBox="0 0 12 10"><path d="M0 0H10.6L5.3 9.2Z" fill="#6e6e6e"/></svg><span id="f44" class="tx " style="left:1623.50px;top:435.5px;letter-spacing:-0.347px;">Scope</span>
<svg class="abs" style="left:1605.3px;top:476.6px" width="12" height="10" viewBox="0 0 12 10"><path d="M0 0H10.6L5.3 9.2Z" fill="#6e6e6e"/></svg>
<span id="f45" class="tx mono" style="left:1620.40px;top:469.1px;color:#222">Local</span>
<svg class="abs" style="left:1618.8px;top:500.8px" width="9" height="12" viewBox="0 0 9 12"><path d="M0 0V10.8L7.4 5.4Z" fill="#6e6e6e"/></svg>
<span class="tx mono" style="left:1631.6px;top:495.2px;color:#222"><span style="color:#881391">this</span>: Window</span>
<svg class="abs" style="left:1606.8px;top:526.6px" width="9" height="12" viewBox="0 0 9 12"><path d="M0 0V10.8L7.4 5.4Z" fill="#6e6e6e"/></svg>
<span id="f46" class="tx mono" style="left:1620.00px;top:520.9px;color:#222">Global</span>
<span id="f47" class="tx mono" style="left:1854.00px;top:520.9px;color:#222">Window</span>
<div class="abs" style="left:1598px;top:546.0px;width:322px;height:34.0px;background:#f3f3f3"></div><div class="abs" style="left:1598px;top:546.0px;width:322px;height:2.0px;background:#cbcbcb"></div><div class="abs" style="left:1598px;top:578.0px;width:322px;height:2.0px;background:#cbcbcb"></div><svg class="abs" style="left:1606.7px;top:560.1px" width="12" height="10" viewBox="0 0 12 10"><path d="M0 0H10.6L5.3 9.2Z" fill="#6e6e6e"/></svg><span id="f48" class="tx " style="left:1622.50px;top:551.6px;letter-spacing:-0.016px;">Breakpoints</span>
<div class="abs" style="left:1598px;top:580px;width:322px;height:58.6px;background:#ffffc2"></div>
<div class="abs" style="left:1915px;top:580px;width:5px;height:58.6px;background:#6b5e2e"></div>
<svg class="abs" style="left:1615.8px;top:589.8px" width="19" height="19" viewBox="0 0 19 19"><rect x="1" y="1.6" width="16" height="15.4" rx="3" fill="#c9c9c9"/><rect x="0.9" y="0.7" width="15.6" height="15" rx="2.6" fill="#ececec" stroke="#a2a2a2" stroke-width="1.2"/><path d="M3.8 8.4L7 11.8L13.2 4.4" fill="none" stroke="#333" stroke-width="2.7"/></svg>
<span id="f49" class="tx " style="left:1642.40px;top:587.3px;letter-spacing:0.303px;color:#222">login.do?view=vip&amp;service=htt…</span>
<span id="f50" class="tx mono" style="left:1643.40px;top:612.0px;color:#222">$(&quot;input[name=&#x27;password&#x27;]…</span>
<div class="abs" style="left:1598px;top:638.6px;width:322px;height:2.0px;background:#e6e6e6"></div>
<svg class="abs" style="left:1615.8px;top:648.9px" width="19" height="19" viewBox="0 0 19 19"><rect x="1" y="1.6" width="16" height="15.4" rx="3" fill="#c9c9c9"/><rect x="0.9" y="0.7" width="15.6" height="15" rx="2.6" fill="#ececec" stroke="#a2a2a2" stroke-width="1.2"/><path d="M3.8 8.4L7 11.8L13.2 4.4" fill="none" stroke="#333" stroke-width="2.7"/></svg>
<span id="f51" class="tx " style="left:1642.40px;top:646.4px;letter-spacing:0.303px;color:#222">login.do?view=vip&amp;service=htt…</span>
<span id="f52" class="tx mono" style="left:1643.40px;top:672.4px;color:#222">&lt;div class=&quot;btn-long btn-…</span>
<div class="abs" style="left:1598px;top:698.0px;width:322px;height:35.0px;background:#f3f3f3"></div><div class="abs" style="left:1598px;top:698.0px;width:322px;height:2.0px;background:#cbcbcb"></div><div class="abs" style="left:1598px;top:731.0px;width:322px;height:2.0px;background:#cbcbcb"></div><svg class="abs" style="left:1608.0px;top:711.0px" width="9" height="12" viewBox="0 0 9 12"><path d="M0 0V10.8L7.4 5.4Z" fill="#6e6e6e"/></svg><span id="f53" class="tx " style="left:1623.50px;top:703.6px;letter-spacing:0.036px;">XHR/fetch Breakpoints</span>
<div class="abs" style="left:1598px;top:731.0px;width:322px;height:35.0px;background:#f3f3f3"></div><div class="abs" style="left:1598px;top:731.0px;width:322px;height:2.0px;background:#cbcbcb"></div><div class="abs" style="left:1598px;top:764.0px;width:322px;height:2.0px;background:#cbcbcb"></div><svg class="abs" style="left:1608.0px;top:744.1px" width="9" height="12" viewBox="0 0 9 12"><path d="M0 0V10.8L7.4 5.4Z" fill="#6e6e6e"/></svg><span id="f54" class="tx " style="left:1622.50px;top:736.7px;letter-spacing:0.175px;">DOM Breakpoints</span>
<div class="abs" style="left:1598px;top:764.0px;width:322px;height:35.0px;background:#f3f3f3"></div><div class="abs" style="left:1598px;top:764.0px;width:322px;height:2.0px;background:#cbcbcb"></div><div class="abs" style="left:1598px;top:797.0px;width:322px;height:2.0px;background:#cbcbcb"></div><svg class="abs" style="left:1608.0px;top:777.1px" width="9" height="12" viewBox="0 0 9 12"><path d="M0 0V10.8L7.4 5.4Z" fill="#6e6e6e"/></svg><span id="f55" class="tx " style="left:1623.50px;top:769.7px;letter-spacing:-0.127px;">Global Listeners</span>
<div class="abs" style="left:1598px;top:797.0px;width:322px;height:33.0px;background:#f3f3f3"></div><div class="abs" style="left:1598px;top:797.0px;width:322px;height:2.0px;background:#cbcbcb"></div><div class="abs" style="left:1598px;top:828.0px;width:322px;height:2.0px;background:#cbcbcb"></div><svg class="abs" style="left:1608.0px;top:810.0px" width="9" height="12" viewBox="0 0 9 12"><path d="M0 0V10.8L7.4 5.4Z" fill="#6e6e6e"/></svg><span id="f56" class="tx " style="left:1622.50px;top:802.6px;letter-spacing:-0.036px;">Event Listener Breakpoints</span>
<div class="abs" style="left:1598px;top:828px;width:322px;height:1.7px;background:#f3f3f3"></div>
<div class="abs" style="left:1905px;top:700px;width:10px;height:84px;background:linear-gradient(to right,rgba(0,0,0,0),rgba(0,0,0,0.05))"></div>
<div class="abs" style="left:1913.4px;top:696.4px;width:12px;height:88.8px;border-radius:4px;background:linear-gradient(#62b4f6,#8b80f2 18%,#8b80f2 82%,#55b2f6)"></div>
<div class="abs" style="left:1915px;top:698px;width:12px;height:85.6px;border-radius:3px;background:#2b2b3b"></div>
<div class="abs" style="left:1916.2px;top:706px;width:12px;height:76.6px;border-radius:2px 0 0 3px;background:linear-gradient(#12b85c,#16c264 70%,#5ddc6e)"></div>
</body></html>
